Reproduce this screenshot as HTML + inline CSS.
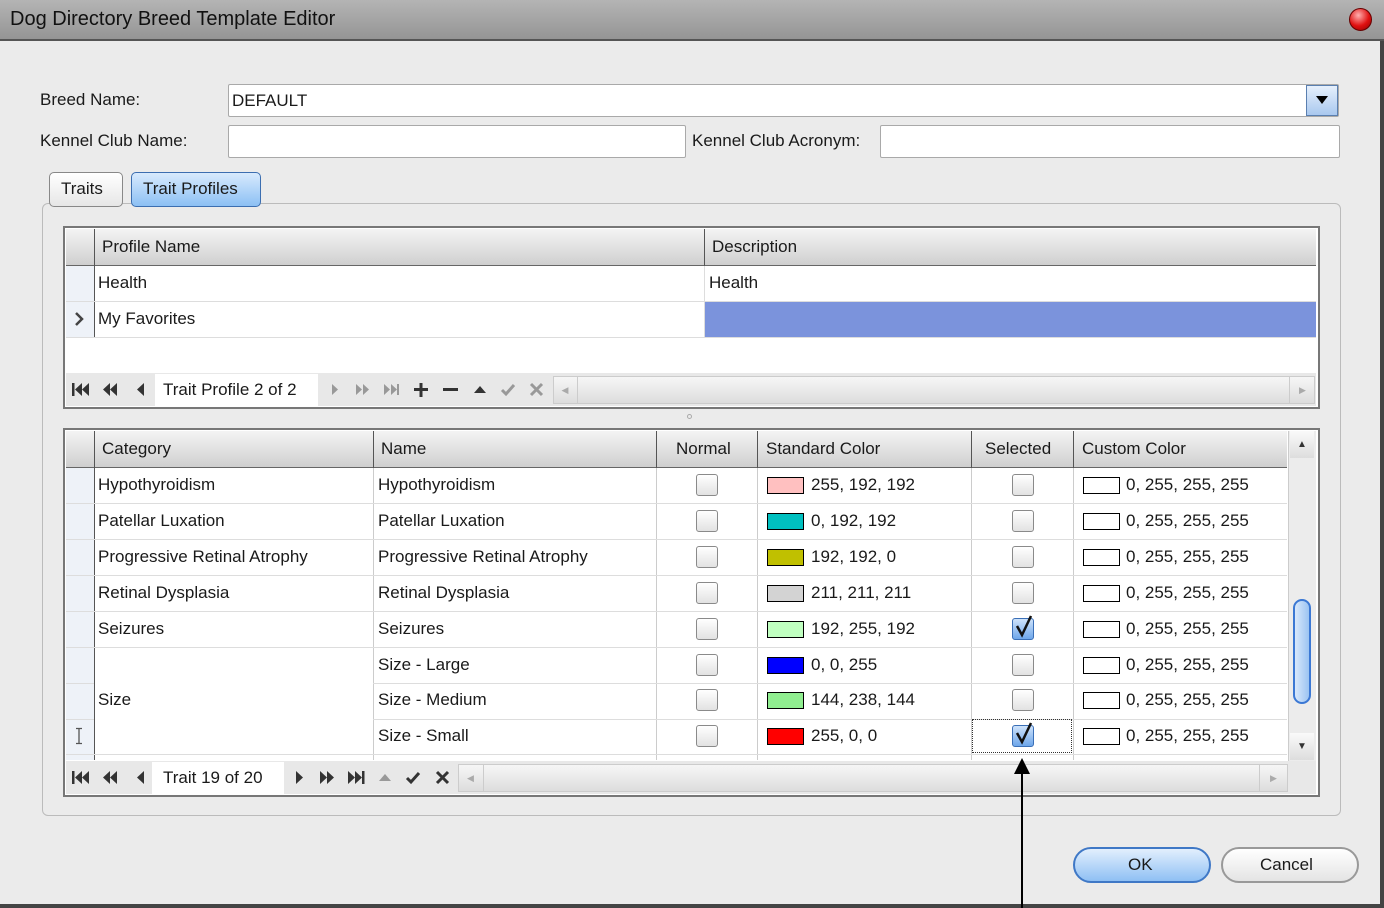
<!DOCTYPE html>
<html><head><meta charset="utf-8"><style>
*{box-sizing:border-box;margin:0;padding:0}
body{width:1384px;height:908px;overflow:hidden;background:#ebebeb;font-family:"Liberation Sans",sans-serif;font-size:17px;color:#1a1a1a;position:relative}
.a{position:absolute}
.t{position:absolute;white-space:nowrap;line-height:20px}
.inp{position:absolute;background:#fff;border:1px solid #a9a9a9;border-radius:2px}
.hdr{background:linear-gradient(#f4f4f4,#cfcfcf);border-bottom:1px solid #666}
.cb{position:absolute;width:22px;height:22px;border:1px solid #8a8a8a;border-radius:3px;background:linear-gradient(#fff,#e2e2e2)}
.cb.on{background:linear-gradient(#cfe3fb,#6ea6ea);border-color:#3a6fb7}
.sw{position:absolute;width:37px;height:17px;border:1px solid #000}
</style></head><body>
<div class="a" style="left:0;top:0;width:1384px;height:41px;background:linear-gradient(#b4b4b4,#959595);border-bottom:2px solid #555"></div>
<div class="t" style="left:10px;top:9px;font-size:20px;color:#111">Dog Directory Breed Template Editor</div>
<div class="a" style="left:1349px;top:8px;width:23px;height:23px;border-radius:50%;background:radial-gradient(circle at 40% 30%,#ffb0b0,#e01010 55%,#800);border:1px solid #600"></div>
<div class="a" style="left:1380px;top:41px;width:4px;height:867px;background:#444"></div>
<div class="a" style="left:0;top:904px;width:1384px;height:4px;background:#444"></div>

<div class="t" style="left:40px;top:90px">Breed Name:</div>
<div class="inp" style="left:228px;top:84px;width:1111px;height:33px"></div>
<div class="t" style="left:232px;top:91px">DEFAULT</div>
<div class="a" style="left:1306px;top:85px;width:32px;height:31px;background:linear-gradient(#e6f0fc,#a9c8ef);border:1px solid #5a7fb0"></div>
<div class="a" style="left:1316px;top:96px;width:0;height:0;border-left:6px solid transparent;border-right:6px solid transparent;border-top:8px solid #000"></div>

<div class="t" style="left:40px;top:131px">Kennel Club Name:</div>
<div class="inp" style="left:228px;top:125px;width:458px;height:33px"></div>
<div class="t" style="left:692px;top:131px">Kennel Club Acronym:</div>
<div class="inp" style="left:880px;top:125px;width:460px;height:33px"></div>

<div class="a" style="left:42px;top:203px;width:1299px;height:613px;border:1px solid #bbb;border-radius:6px;background:#ebebeb"></div>
<div class="a" style="left:49px;top:172px;width:74px;height:35px;border:1px solid #888;border-radius:5px;background:linear-gradient(#fff,#e6e6e6)"></div>
<div class="t" style="left:61px;top:179px">Traits</div>
<div class="a" style="left:131px;top:172px;width:130px;height:35px;border:1px solid #3c6eb0;border-radius:5px;background:linear-gradient(#d8eafd,#8cc0f4)"></div>
<div class="t" style="left:143px;top:179px">Trait Profiles</div>

<!-- grid 1 -->
<div class="a" style="left:63px;top:226px;width:1257px;height:183px;border:2px solid #777;background:#fff"></div>
<div class="a hdr" style="left:66px;top:229px;width:1250px;height:37px"></div>
<div class="a" style="left:94px;top:229px;width:1px;height:108px;background:#555"></div>
<div class="a" style="left:704px;top:229px;width:1px;height:37px;background:#555"></div>
<div class="t" style="left:102px;top:237px">Profile Name</div>
<div class="t" style="left:712px;top:237px">Description</div>
<div class="a" style="left:66px;top:266px;width:28px;height:71px;background:#eef2f8"></div>
<div class="a" style="left:66px;top:301px;width:1250px;height:1px;background:#ddd"></div>
<div class="a" style="left:66px;top:337px;width:1250px;height:1px;background:#ddd"></div>
<div class="a" style="left:704px;top:266px;width:1px;height:71px;background:#ddd"></div>
<div class="a" style="left:705px;top:302px;width:611px;height:35px;background:#7b93dc"></div>
<div class="t" style="left:98px;top:273px">Health</div>
<div class="t" style="left:709px;top:273px">Health</div>
<svg class="a" style="left:74px;top:311px" width="10" height="16"><path d="M2 2 L8 8 L2 14" stroke="#444" stroke-width="2.5" fill="none"/></svg>
<div class="t" style="left:98px;top:309px">My Favorites</div>
<div class="a" style="left:66px;top:373px;width:1250px;height:33px;background:#e8e8e8"></div>
<div class="a" style="left:155px;top:374px;width:163px;height:32px;background:#fff"></div>
<div class="t" style="left:163px;top:380px">Trait Profile 2 of 2</div>
<svg class="a" style="left:66px;top:373px" width="490" height="33">
<g fill="#333">
<rect x="6" y="10" width="2.5" height="13"/><path d="M16 10 L9 16.5 L16 23Z M23 10 L16 16.5 L23 23Z"/>
<path d="M44 10 L37 16.5 L44 23Z M51 10 L44 16.5 L51 23Z"/>
<path d="M78 10 L71 16.5 L78 23Z"/>
</g>
<g fill="#999">
<path d="M266 11 L272 16.5 L266 22Z"/>
<path d="M290 11 L296 16.5 L290 22Z M297 11 L303 16.5 L297 22Z"/>
<path d="M318 11 L324 16.5 L318 22Z M325 11 L331 16.5 L325 22Z"/><rect x="331" y="11" width="2" height="11"/>
</g>
<g fill="#333"><rect x="348" y="15" width="14" height="3"/><rect x="353.5" y="10" width="3" height="14"/>
<rect x="377" y="15" width="15" height="3"/><path d="M408 20 L414 13 L420 20Z"/></g>
<path d="M436 17 L440 21 L448 12" stroke="#999" stroke-width="3" fill="none"/>
<path d="M465 11 L476 22 M476 11 L465 22" stroke="#999" stroke-width="3"/>
</svg>
<div class="a" style="left:553px;top:376px;width:762px;height:28px;background:linear-gradient(#f6f6f6,#ddd);border:1px solid #ccc"></div>
<div class="a" style="left:553px;top:376px;width:25px;height:28px;border-right:1px solid #ccc;font-size:9px;color:#aaa;line-height:28px;text-align:center">◀</div>
<div class="a" style="left:1289px;top:376px;width:26px;height:28px;border-left:1px solid #ccc;font-size:9px;color:#aaa;line-height:28px;text-align:center">▶</div>
<div class="a" style="left:687px;top:414px;width:5px;height:5px;border-radius:50%;border:1px solid #aaa"></div>

<!-- grid 2 -->
<div class="a" style="left:63px;top:428px;width:1257px;height:369px;border:2px solid #777;background:#fff"></div>
<div class="a hdr" style="left:66px;top:431px;width:1221px;height:37px"></div>
<div class="a" style="left:66px;top:468px;width:28px;height:292px;background:#eef2f8"></div>
<div class="a" style="left:94px;top:431px;width:1px;height:329px;background:#555"></div>
<div class="a" style="left:373px;top:431px;width:1px;height:329px;background:#ccc"></div>
<div class="a" style="left:656px;top:431px;width:1px;height:329px;background:#ccc"></div>
<div class="a" style="left:757px;top:431px;width:1px;height:329px;background:#ccc"></div>
<div class="a" style="left:971px;top:431px;width:1px;height:329px;background:#ccc"></div>
<div class="a" style="left:1073px;top:431px;width:1px;height:329px;background:#ccc"></div>
<div class="a" style="left:373px;top:431px;width:1px;height:37px;background:#555"></div>
<div class="a" style="left:656px;top:431px;width:1px;height:37px;background:#555"></div>
<div class="a" style="left:757px;top:431px;width:1px;height:37px;background:#555"></div>
<div class="a" style="left:971px;top:431px;width:1px;height:37px;background:#555"></div>
<div class="a" style="left:1073px;top:431px;width:1px;height:37px;background:#555"></div>
<div class="t" style="left:102px;top:439px">Category</div>
<div class="t" style="left:381px;top:439px">Name</div>
<div class="t" style="left:676px;top:439px">Normal</div>
<div class="t" style="left:766px;top:439px">Standard Color</div>
<div class="t" style="left:985px;top:439px">Selected</div>
<div class="t" style="left:1082px;top:439px">Custom Color</div>
<div class="a" style="left:66px;top:503px;width:1221px;height:1px;background:#ddd"></div>
<div class="a" style="left:66px;top:539px;width:1221px;height:1px;background:#ddd"></div>
<div class="a" style="left:66px;top:575px;width:1221px;height:1px;background:#ddd"></div>
<div class="a" style="left:66px;top:611px;width:1221px;height:1px;background:#ddd"></div>
<div class="a" style="left:66px;top:647px;width:1221px;height:1px;background:#ddd"></div>
<div class="a" style="left:373px;top:683px;width:914px;height:1px;background:#ddd"></div>
<div class="a" style="left:373px;top:719px;width:914px;height:1px;background:#ddd"></div>
<div class="a" style="left:66px;top:754px;width:1221px;height:1px;background:#ddd"></div>
<div class="a" style="left:66px;top:683px;width:28px;height:1px;background:#ddd"></div>
<div class="a" style="left:66px;top:719px;width:28px;height:1px;background:#ddd"></div>

<div class="t" style="left:98px;top:475px">Hypothyroidism</div><div class="t" style="left:378px;top:475px">Hypothyroidism</div>
<div class="t" style="left:98px;top:511px">Patellar Luxation</div><div class="t" style="left:378px;top:511px">Patellar Luxation</div>
<div class="t" style="left:98px;top:547px">Progressive Retinal Atrophy</div><div class="t" style="left:378px;top:547px">Progressive Retinal Atrophy</div>
<div class="t" style="left:98px;top:583px">Retinal Dysplasia</div><div class="t" style="left:378px;top:583px">Retinal Dysplasia</div>
<div class="t" style="left:98px;top:619px">Seizures</div><div class="t" style="left:378px;top:619px">Seizures</div>
<div class="t" style="left:98px;top:690px">Size</div>
<div class="t" style="left:378px;top:655px">Size - Large</div>
<div class="t" style="left:378px;top:690px">Size - Medium</div>
<div class="t" style="left:378px;top:726px">Size - Small</div>
<svg class="a" style="left:74px;top:727px" width="10" height="18"><path d="M2 1.5 H8 M2 16.5 H8 M5 1.5 V16.5" stroke="#555" stroke-width="1.3" fill="none"/></svg>

<div class="cb" style="left:696px;top:474px"></div><div class="cb" style="left:696px;top:510px"></div><div class="cb" style="left:696px;top:546px"></div><div class="cb" style="left:696px;top:582px"></div><div class="cb" style="left:696px;top:618px"></div><div class="cb" style="left:696px;top:654px"></div><div class="cb" style="left:696px;top:689px"></div><div class="cb" style="left:696px;top:725px"></div>
<div class="cb" style="left:1012px;top:474px"></div><div class="cb" style="left:1012px;top:510px"></div><div class="cb" style="left:1012px;top:546px"></div><div class="cb" style="left:1012px;top:582px"></div>
<div class="cb on" style="left:1012px;top:618px"></div>
<svg class="a" style="left:1012px;top:613px" width="24" height="26"><path d="M5 13 L10 22 L19 3" stroke="#111" stroke-width="2.5" fill="none"/></svg>
<div class="cb" style="left:1012px;top:654px"></div><div class="cb" style="left:1012px;top:689px"></div>
<div class="a" style="left:972px;top:719px;width:100px;height:34px;border:1px dotted #333"></div>
<div class="cb on" style="left:1012px;top:725px"></div>
<svg class="a" style="left:1012px;top:720px" width="24" height="26"><path d="M5 13 L10 22 L19 3" stroke="#111" stroke-width="2.5" fill="none"/></svg>

<div class="sw" style="left:767px;top:477px;background:#ffc0c0"></div><div class="t" style="left:811px;top:475px">255, 192, 192</div>
<div class="sw" style="left:767px;top:513px;background:#00c0c0"></div><div class="t" style="left:811px;top:511px">0, 192, 192</div>
<div class="sw" style="left:767px;top:549px;background:#c0c000"></div><div class="t" style="left:811px;top:547px">192, 192, 0</div>
<div class="sw" style="left:767px;top:585px;background:#d3d3d3"></div><div class="t" style="left:811px;top:583px">211, 211, 211</div>
<div class="sw" style="left:767px;top:621px;background:#c0ffc0"></div><div class="t" style="left:811px;top:619px">192, 255, 192</div>
<div class="sw" style="left:767px;top:657px;background:#0000ff"></div><div class="t" style="left:811px;top:655px">0, 0, 255</div>
<div class="sw" style="left:767px;top:692px;background:#90ee90"></div><div class="t" style="left:811px;top:690px">144, 238, 144</div>
<div class="sw" style="left:767px;top:728px;background:#ff0000"></div><div class="t" style="left:811px;top:726px">255, 0, 0</div>
<div class="sw" style="left:1083px;top:477px;background:#fff"></div><div class="t" style="left:1126px;top:475px">0, 255, 255, 255</div>
<div class="sw" style="left:1083px;top:513px;background:#fff"></div><div class="t" style="left:1126px;top:511px">0, 255, 255, 255</div>
<div class="sw" style="left:1083px;top:549px;background:#fff"></div><div class="t" style="left:1126px;top:547px">0, 255, 255, 255</div>
<div class="sw" style="left:1083px;top:585px;background:#fff"></div><div class="t" style="left:1126px;top:583px">0, 255, 255, 255</div>
<div class="sw" style="left:1083px;top:621px;background:#fff"></div><div class="t" style="left:1126px;top:619px">0, 255, 255, 255</div>
<div class="sw" style="left:1083px;top:657px;background:#fff"></div><div class="t" style="left:1126px;top:655px">0, 255, 255, 255</div>
<div class="sw" style="left:1083px;top:692px;background:#fff"></div><div class="t" style="left:1126px;top:690px">0, 255, 255, 255</div>
<div class="sw" style="left:1083px;top:728px;background:#fff"></div><div class="t" style="left:1126px;top:726px">0, 255, 255, 255</div>

<div class="a" style="left:1288px;top:431px;width:28px;height:330px;background:#ececec;border-left:1px solid #ccc"></div>
<div class="a" style="left:1290px;top:431px;width:24px;height:27px;background:linear-gradient(#fafafa,#ddd);font-size:10px;text-align:center;line-height:27px;color:#333">▲</div>
<div class="a" style="left:1290px;top:733px;width:24px;height:27px;background:linear-gradient(#fafafa,#ddd);font-size:10px;text-align:center;line-height:27px;color:#333">▼</div>
<div class="a" style="left:1293px;top:599px;width:18px;height:105px;border-radius:9px;border:2px solid #3b78d4;background:linear-gradient(90deg,#d8e8fb,#9cc4f2)"></div>

<!-- nav 2 -->
<div class="a" style="left:66px;top:761px;width:1250px;height:33px;background:#e8e8e8"></div>
<div class="a" style="left:152px;top:762px;width:132px;height:32px;background:#fff"></div>
<div class="t" style="left:163px;top:768px">Trait 19 of 20</div>
<svg class="a" style="left:66px;top:761px" width="392" height="33">
<g fill="#333">
<rect x="6" y="10" width="2.5" height="13"/><path d="M16 10 L9 16.5 L16 23Z M23 10 L16 16.5 L23 23Z"/>
<path d="M44 10 L37 16.5 L44 23Z M51 10 L44 16.5 L51 23Z"/>
<path d="M78 10 L71 16.5 L78 23Z"/>
<path d="M230 10 L237 16.5 L230 23Z"/>
<path d="M254 10 L261 16.5 L254 23Z M261 10 L268 16.5 L261 23Z"/>
<path d="M282 10 L289 16.5 L282 23Z M289 10 L296 16.5 L289 23Z"/><rect x="296" y="10" width="2.5" height="13"/>
</g>
<path d="M313 20 L319 13 L325 20Z" fill="#999"/>
<path d="M341 17 L345 21 L353 12" stroke="#333" stroke-width="3" fill="none"/>
<path d="M371 11 L382 22 M382 11 L371 22" stroke="#333" stroke-width="3"/>
</svg>
<div class="a" style="left:458px;top:764px;width:830px;height:28px;background:linear-gradient(#f6f6f6,#ddd);border:1px solid #ccc"></div>
<div class="a" style="left:458px;top:764px;width:26px;height:28px;border-right:1px solid #ccc;font-size:9px;color:#aaa;line-height:28px;text-align:center">◀</div>
<div class="a" style="left:1259px;top:764px;width:28px;height:28px;border-left:1px solid #ccc;font-size:9px;color:#aaa;line-height:28px;text-align:center">▶</div>

<div class="a" style="left:1073px;top:847px;width:138px;height:36px;border:2px solid #3f78c6;border-radius:18px;background:linear-gradient(#e2effd,#8fc0f4)"></div>
<div class="t" style="left:1128px;top:855px">OK</div>
<div class="a" style="left:1221px;top:847px;width:138px;height:36px;border:2px solid #999;border-radius:18px;background:linear-gradient(#fff,#e4e4e4)"></div>
<div class="t" style="left:1260px;top:855px">Cancel</div>

<div class="a" style="left:1021px;top:770px;width:2px;height:138px;background:#000"></div>
<div class="a" style="left:1014px;top:758px;width:0;height:0;border-left:8px solid transparent;border-right:8px solid transparent;border-bottom:16px solid #000"></div>
</body></html>
